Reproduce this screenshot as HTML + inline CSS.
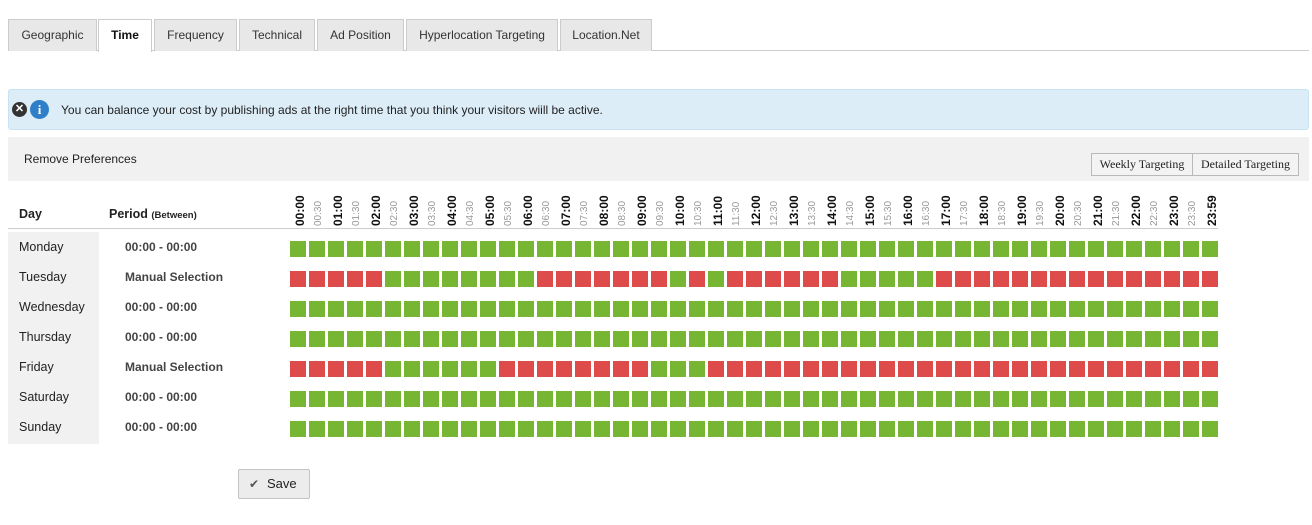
<!DOCTYPE html>
<html><head><meta charset="utf-8"><style>
*{box-sizing:border-box;margin:0;padding:0}
body{width:1312px;height:525px;background:#fff;font-family:"Liberation Sans",Arial,sans-serif;font-size:12px;color:#222;position:relative;overflow:hidden}
.tabs{position:absolute;left:8px;top:19px;right:3px;height:32px;border-bottom:1px solid #ccc}
.tab{position:absolute;top:0;height:32px;background:#e8e8e8;border:1px solid #ccc;border-bottom:none;font-size:12px;line-height:30px;text-align:center;color:#333}
.tab.act{background:#fff;height:33px;font-weight:bold;color:#111}
.info{position:absolute;left:8px;top:89px;width:1301px;height:41px;background:#dcedf8;border:1px solid #c7e2f1;border-radius:3px}
.info .t{position:absolute;left:52px;top:13px;font-size:12px;color:#222}
.ix{position:absolute;left:3px;top:12px;width:15px;height:15px;border-radius:50%;background:#333;color:#fff;font-size:11px;font-weight:bold;line-height:15px;text-align:center}
.ii{position:absolute;left:21px;top:10px;width:19px;height:19px;border-radius:50%;background:#2f7fc8;color:#fff;font-size:13px;font-weight:bold;line-height:19px;text-align:center;font-family:"Liberation Serif",serif}
.bar{position:absolute;left:8px;top:137px;width:1301px;height:44px;background:#f1f1f1}
.bar .rp{position:absolute;left:16px;top:15px;font-size:12px;color:#222}
.bt{position:absolute;top:16px;height:23px;border:1px solid #b9b9b9;background:#f3f3f3;font-family:"Liberation Serif",serif;font-size:12px;line-height:21px;text-align:center;color:#222}
.hd{position:absolute;top:207px;font-weight:bold;font-size:12.5px}
.hline{position:absolute;left:8px;top:228px;width:1210px;height:1px;background:#ccc}
.daycol{position:absolute;left:8px;top:232px;width:91px;height:212px;background:#f1f1f1}
.day{position:absolute;left:19px;font-size:12.5px;color:#222}
.per{position:absolute;left:125px;font-size:12px;font-weight:bold;color:#444}
.labels{position:absolute;left:290px;top:188px;display:flex}
.lb{width:19px;height:38px;display:flex;justify-content:center}
.lb span{writing-mode:vertical-rl;transform:rotate(180deg);white-space:nowrap}
.h{font-weight:bold;font-size:12px;color:#111}
.m{font-size:10px;color:#999}
.row{position:absolute;left:290px;width:928px;height:16px}
.row::after{content:"";position:absolute;inset:0;background:repeating-linear-gradient(to right,transparent 0 16px,#fff 16px 19px)}
.g{background:#77b633}
.tue{background:linear-gradient(to right,#de4b4b 0 95px,#77b633 95px 247px,#de4b4b 247px 380px,#77b633 380px 399px,#de4b4b 399px 418px,#77b633 418px 437px,#de4b4b 437px 551px,#77b633 551px 646px,#de4b4b 646px)}
.fri{background:linear-gradient(to right,#de4b4b 0 95px,#77b633 95px 209px,#de4b4b 209px 361px,#77b633 361px 418px,#de4b4b 418px)}
.save{position:absolute;left:238px;top:469px;width:72px;height:30px;border:1px solid #c4c4c4;border-radius:2px;background:#ececec;font-size:13px;line-height:28px;color:#222}
</style></head><body>
<div class="tabs">
<div class="tab" style="left:0;width:89px">Geographic</div>
<div class="tab act" style="left:90px;width:54px">Time</div>
<div class="tab" style="left:146px;width:83px">Frequency</div>
<div class="tab" style="left:231px;width:76px">Technical</div>
<div class="tab" style="left:309px;width:87px">Ad Position</div>
<div class="tab" style="left:398px;width:152px">Hyperlocation Targeting</div>
<div class="tab" style="left:552px;width:92px">Location.Net</div>
</div>
<div class="info"><div class="ix">✕</div><div class="ii">i</div><div class="t">You can balance your cost by publishing ads at the right time that you think your visitors wiill be active.</div></div>
<div class="bar"><div class="rp">Remove Preferences</div>
<div class="bt" style="left:1083px;width:102px">Weekly Targeting</div>
<div class="bt" style="left:1184px;width:107px">Detailed Targeting</div></div>
<div class="hd" style="left:19px">Day</div>
<div class="hd" style="left:109px">Period <span style="font-size:9.5px">(Between)</span></div>
<div class="labels">
<div class="lb"><span class="h">00:00</span></div><div class="lb"><span class="m">00:30</span></div>
<div class="lb"><span class="h">01:00</span></div><div class="lb"><span class="m">01:30</span></div>
<div class="lb"><span class="h">02:00</span></div><div class="lb"><span class="m">02:30</span></div>
<div class="lb"><span class="h">03:00</span></div><div class="lb"><span class="m">03:30</span></div>
<div class="lb"><span class="h">04:00</span></div><div class="lb"><span class="m">04:30</span></div>
<div class="lb"><span class="h">05:00</span></div><div class="lb"><span class="m">05:30</span></div>
<div class="lb"><span class="h">06:00</span></div><div class="lb"><span class="m">06:30</span></div>
<div class="lb"><span class="h">07:00</span></div><div class="lb"><span class="m">07:30</span></div>
<div class="lb"><span class="h">08:00</span></div><div class="lb"><span class="m">08:30</span></div>
<div class="lb"><span class="h">09:00</span></div><div class="lb"><span class="m">09:30</span></div>
<div class="lb"><span class="h">10:00</span></div><div class="lb"><span class="m">10:30</span></div>
<div class="lb"><span class="h">11:00</span></div><div class="lb"><span class="m">11:30</span></div>
<div class="lb"><span class="h">12:00</span></div><div class="lb"><span class="m">12:30</span></div>
<div class="lb"><span class="h">13:00</span></div><div class="lb"><span class="m">13:30</span></div>
<div class="lb"><span class="h">14:00</span></div><div class="lb"><span class="m">14:30</span></div>
<div class="lb"><span class="h">15:00</span></div><div class="lb"><span class="m">15:30</span></div>
<div class="lb"><span class="h">16:00</span></div><div class="lb"><span class="m">16:30</span></div>
<div class="lb"><span class="h">17:00</span></div><div class="lb"><span class="m">17:30</span></div>
<div class="lb"><span class="h">18:00</span></div><div class="lb"><span class="m">18:30</span></div>
<div class="lb"><span class="h">19:00</span></div><div class="lb"><span class="m">19:30</span></div>
<div class="lb"><span class="h">20:00</span></div><div class="lb"><span class="m">20:30</span></div>
<div class="lb"><span class="h">21:00</span></div><div class="lb"><span class="m">21:30</span></div>
<div class="lb"><span class="h">22:00</span></div><div class="lb"><span class="m">22:30</span></div>
<div class="lb"><span class="h">23:00</span></div><div class="lb"><span class="m">23:30</span></div>
<div class="lb"><span class="h">23:59</span></div>
</div>
<div class="hline"></div>
<div class="daycol"></div>
<div class="day" style="top:240px">Monday</div><div class="per" style="top:240px">00:00 - 00:00</div><div class="row g" style="top:241px"></div>
<div class="day" style="top:270px">Tuesday</div><div class="per" style="top:270px">Manual Selection</div><div class="row tue" style="top:271px"></div>
<div class="day" style="top:300px">Wednesday</div><div class="per" style="top:300px">00:00 - 00:00</div><div class="row g" style="top:301px"></div>
<div class="day" style="top:330px">Thursday</div><div class="per" style="top:330px">00:00 - 00:00</div><div class="row g" style="top:331px"></div>
<div class="day" style="top:360px">Friday</div><div class="per" style="top:360px">Manual Selection</div><div class="row fri" style="top:361px"></div>
<div class="day" style="top:390px">Saturday</div><div class="per" style="top:390px">00:00 - 00:00</div><div class="row g" style="top:391px"></div>
<div class="day" style="top:420px">Sunday</div><div class="per" style="top:420px">00:00 - 00:00</div><div class="row g" style="top:421px"></div>
<div class="save"><span style="position:absolute;left:10px;top:0;font-size:12px;color:#555">✔</span><span style="position:absolute;left:28px">Save</span></div>
</body></html>
